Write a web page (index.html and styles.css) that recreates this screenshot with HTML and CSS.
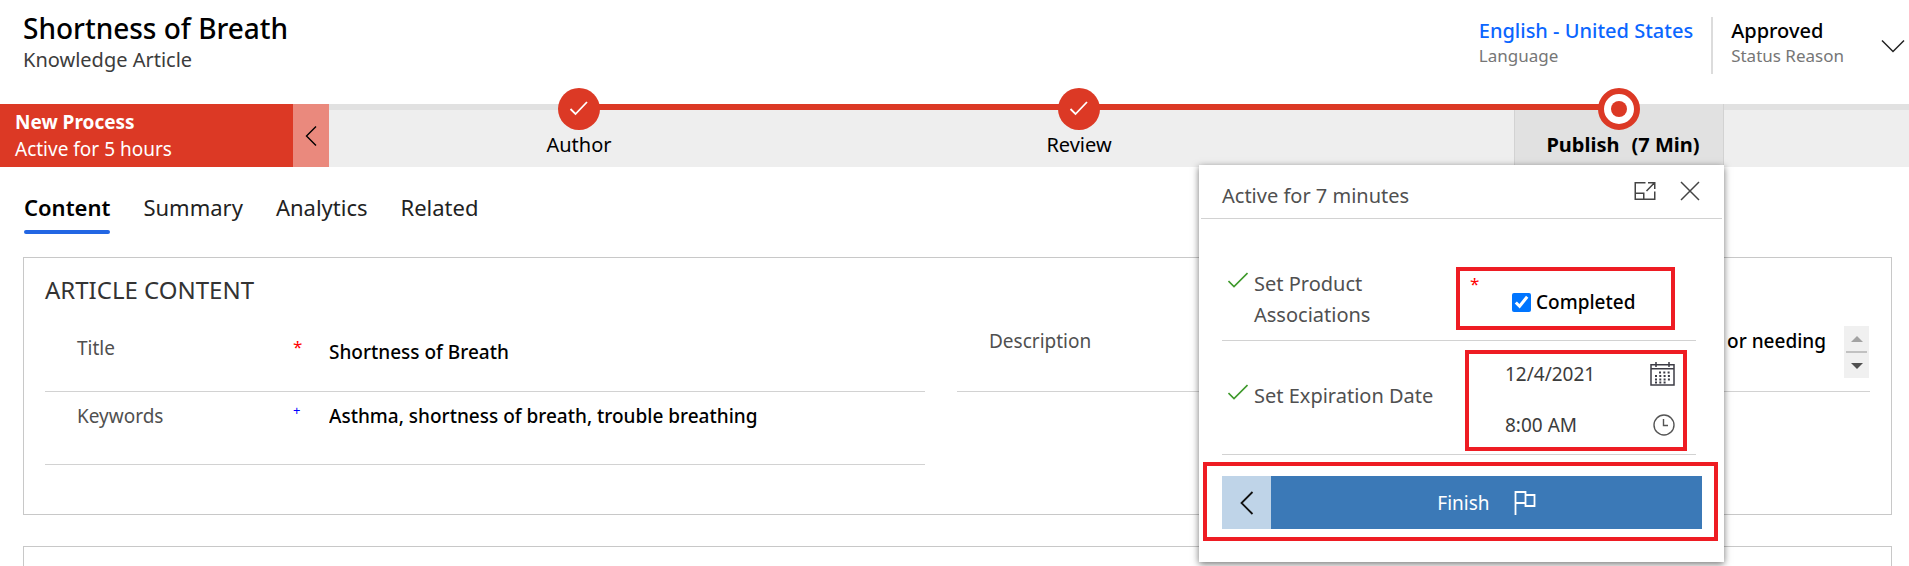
FILE: index.html
```html
<!DOCTYPE html>
<html lang="en">
<head>
<meta charset="utf-8">
<title>Shortness of Breath - Knowledge Article</title>
<link rel="stylesheet" href="styles.css">
</head>
<body>
<header class="record-header">
  <div class="record-heading">
    <h1 class="record-title">Shortness of Breath</h1>
    <p class="record-type">Knowledge Article</p>
  </div>
  <div class="record-facts">
    <div class="fact">
      <a class="fact-value fact-link" href="#">English - United States</a>
      <span class="fact-label">Language</span>
    </div>
    <div class="fact fact-divided">
      <span class="fact-value">Approved</span>
      <span class="fact-label">Status Reason</span>
    </div>
    <button class="icon-button expand-header" type="button" aria-label="Expand header">
      <svg width="24" height="14" viewBox="0 0 24 14" fill="none" stroke="#222" stroke-width="1.5"><path d="M1 1.5 12 12.5 23 1.5"/></svg>
    </button>
  </div>
</header>

<div class="process">
  <div class="process-name">
    <strong class="process-title">New Process</strong>
    <span>Active for 5 hours</span>
  </div>
  <button class="process-collapse" type="button" aria-label="Collapse process">
    <svg width="12" height="20" viewBox="0 0 12 20" fill="none" stroke="#000" stroke-width="1.4"><path d="M11 .5 1.5 10 11 19.5"/></svg>
  </button>
  <div class="stages">
    <div class="stage stage-first">
      <button class="stage-button" type="button">
        <span class="marker"><svg width="20" height="18" viewBox="0 0 20 18" fill="none" stroke="#fff" stroke-width="1.8"><path d="M1.500 9 6.500 14 18 2"/></svg></span>
        <span class="stage-label">Author</span>
      </button>
    </div>
    <div class="stage">
      <button class="stage-button" type="button">
        <span class="marker"><svg width="20" height="18" viewBox="0 0 20 18" fill="none" stroke="#fff" stroke-width="1.8"><path d="M1.500 9 6.500 14 18 2"/></svg></span>
        <span class="stage-label">Review</span>
      </button>
    </div>
    <div class="stage stage-active">
      <div class="stage-anchor">
        <button class="stage-button" type="button">
          <span class="marker marker-current"><span class="marker-dot"></span></span>
          <span class="stage-label"><span>Publish</span><span>(7 Min)</span></span>
        </button>
        <section class="flyout" aria-label="Publish stage">
          <div class="flyout-header">
            <span class="flyout-title">Active for 7 minutes</span>
            <button class="icon-button" type="button" aria-label="Dock">
              <svg width="22" height="20" viewBox="0 0 22 20" fill="none" stroke="#444" stroke-width="1.5"><path d="M11.500 1.750H1.250V18.250H20.750V10.500M1.250 12.250H9.750V18.250M12.500 10 20.500 1.750M14 1.750H20.750V8"/></svg>
            </button>
            <button class="icon-button" type="button" aria-label="Close">
              <svg width="20" height="20" viewBox="0 0 20 20" fill="none" stroke="#444" stroke-width="1.5"><path d="M1 1 19 19M19 1 1 19"/></svg>
            </button>
          </div>
          <div class="flyout-body">
            <div class="step">
              <div class="step-name step-name-top">
                <svg class="step-check" width="20" height="16" viewBox="0 0 20 16" fill="none" stroke="#3f9a2c" stroke-width="1.6"><path d="M.5 9 6 14.500 19.500 1"/></svg>
                <label class="step-label" for="assoc">Set Product Associations</label>
              </div>
              <div class="callout callout-check">
                <span class="required">*</span>
                <label class="completed"><input class="tick" id="assoc" type="checkbox" checked>Completed</label>
              </div>
            </div>
            <div class="step step-date">
              <div class="step-name step-name-middle">
                <svg class="step-check" width="20" height="16" viewBox="0 0 20 16" fill="none" stroke="#3f9a2c" stroke-width="1.6"><path d="M.5 9 6 14.500 19.500 1"/></svg>
                <label class="step-label" for="exp-date">Set Expiration Date</label>
              </div>
              <div class="callout callout-date">
                <div class="date-row">
                  <input class="date-input" id="exp-date" type="text" value="12/4/2021">
                  <button class="icon-button" type="button" aria-label="Pick date">
                    <svg width="25" height="24" viewBox="0 0 25 24" fill="none" stroke="#3c3c46" stroke-width="1.5"><path d="M1 2.750H24V23H1ZM1 6.750H24M6 0V5M19 0V5"/><path stroke-width="2" stroke-dasharray="2 2.300" d="M9 10.500H21M5 14H21M5 17.500H21M5 20.500H17"/></svg>
                  </button>
                </div>
                <div class="date-row">
                  <input class="date-input" type="text" value="8:00 AM" aria-label="Expiration time">
                  <button class="icon-button" type="button" aria-label="Pick time">
                    <svg width="22" height="22" viewBox="0 0 22 22" fill="none" stroke="#555" stroke-width="1.4"><circle cx="11" cy="11" r="10"/><path d="M10.500 5V11.500H15"/></svg>
                  </button>
                </div>
              </div>
            </div>
          </div>
          <div class="callout callout-actions">
            <button class="back" type="button" aria-label="Previous stage">
              <svg width="14" height="24" viewBox="0 0 14 24" fill="none" stroke="#111" stroke-width="1.8"><path d="M12.500 1 1.500 12 12.500 23"/></svg>
            </button>
            <button class="finish" type="button">Finish
              <svg width="22" height="24" viewBox="0 0 22 24" fill="none" stroke="#fff" stroke-width="1.8"><path d="M1.500 24V1H11.500V12H1.500M11.500 4H20.500V15H11.500V12"/></svg>
            </button>
          </div>
        </section>
      </div>
    </div>
  </div>
</div>

<nav class="tabs">
  <a class="tab tab-selected" href="#">Content</a>
  <a class="tab" href="#">Summary</a>
  <a class="tab" href="#">Analytics</a>
  <a class="tab" href="#">Related</a>
</nav>

<section class="card">
  <h2 class="card-title">ARTICLE CONTENT</h2>
  <div class="columns">
    <div>
      <div class="field field-tall">
        <label class="field-label" for="title">Title</label>
        <span class="required">*</span>
        <input class="field-input field-input-title" id="title" type="text" value="Shortness of Breath">
      </div>
      <div class="field">
        <label class="field-label" for="keywords">Keywords</label>
        <span class="recommended">+</span>
        <input class="field-input" id="keywords" type="text" value="Asthma, shortness of breath, trouble breathing">
      </div>
    </div>
    <div>
      <div class="field field-tall field-description">
        <label class="field-label" for="description">Description</label>
        <span></span>
        <div class="description-value">
          <input class="field-input description-input" id="description" type="text" value="or needing">
          <div class="scroller">
            <button class="scroll-button" type="button" aria-label="Scroll up"><svg width="12" height="6" viewBox="0 0 12 6" fill="#a3a3a3"><path d="M6 0 12 6H0Z"/></svg></button>
            <span class="scroll-thumb"></span>
            <button class="scroll-button" type="button" aria-label="Scroll down"><svg width="12" height="6" viewBox="0 0 12 6" fill="#505050"><path d="M0 0H12L6 6Z"/></svg></button>
          </div>
        </div>
      </div>
    </div>
  </div>
</section>
<section class="card card-next"></section>
</body>
</html>
```
FILE: styles.css
```css
* { box-sizing: border-box; }

body {
  margin: 0;
  min-height: 100vh;
  display: flex;
  flex-direction: column;
  background: #fff;
  color: #000;
  font-family: "Noto Sans", "Open Sans", sans-serif;
  font-size: 19px;
  line-height: 30px;
}

h1, h2, p { margin: 0; font-weight: 400; }
a { color: inherit; text-decoration: none; }
svg { display: block; flex: none; }
button, input { font: inherit; color: inherit; }
button { border: 0; padding: 0; background: none; }

.icon-button { flex: none; display: flex; }

.record-header {
  display: flex;
  justify-content: space-between;
  height: 104px;
}
.record-heading { padding: 10px 0 0 23px; }
.record-title { font-size: 28px; line-height: 36px; font-weight: 500; }
.record-type { font-size: 20px; line-height: 28px; color: #3c3c3c; }

.record-facts {
  display: flex;
  align-items: flex-start;
  padding: 17px 4px 0 0;
}
.fact { display: flex; flex-direction: column; padding-bottom: 6px; }
.fact-divided { margin-left: 18px; padding-left: 18px; border-left: 2px solid #dcdcdc; }
.fact-value { font-size: 20px; line-height: 27px; font-weight: 500; }
.fact-link { color: #0b66ff; }
.fact-label { font-size: 17px; line-height: 24px; color: #767676; }
.expand-header { margin: 22px 0 0 37px; }

.process { display: flex; height: 63px; background: #eee; }
.process-name {
  display: flex;
  flex-direction: column;
  width: 293px;
  padding: 5px 0 0 15px;
  background: #dc3925;
  color: #fff;
  line-height: 27px;
}
.process-title { font-weight: 700; }
.process-collapse {
  display: flex;
  align-items: center;
  justify-content: center;
  width: 36px;
  background: #ea897d;
}

.stages {
  flex: 1;
  display: grid;
  grid-template-columns: 25fr 25fr 29fr;
  box-shadow: inset 0 6px #e1e1e1;
}
.stage { position: relative; display: flex; justify-content: center; }
.stage::before {
  content: "";
  position: absolute;
  top: 0;
  left: 0;
  right: 0;
  height: 6px;
  background: #dc3925;
}
.stage-first::before { left: 50%; }
.stage-active::before { right: 50%; z-index: 1; }
.stage-anchor {
  position: relative;
  width: 210px;
  display: flex;
  justify-content: center;
  background: #e1e1e1;
  border: solid #d2d2d2;
  border-width: 0 1px;
}
.stage-button {
  position: relative;
  z-index: 2;
  display: flex;
  flex-direction: column;
  align-items: center;
  margin-top: -16px;
  font-size: 20px;
  line-height: 30px;
}
.marker {
  display: flex;
  align-items: center;
  justify-content: center;
  width: 42px;
  height: 42px;
  border-radius: 50%;
  background: #dc3925;
}
.marker-current { border: 6px solid #dc3925; background: #fff; }
.marker-dot { width: 16px; height: 16px; border-radius: 50%; background: #dc3925; }
.stage-label { display: flex; gap: 12px; }
.stage-active .stage-button { width: 100%; }
.stage-active .stage-label { padding-left: 8px; font-weight: 700; }

.flyout {
  position: absolute;
  z-index: 3;
  top: 61px;
  right: -1px;
  width: 525px;
  padding-bottom: 21px;
  background: #fff;
  box-shadow: 0 2px 7px rgba(0, 0, 0, .55);
}
.flyout-header {
  display: flex;
  align-items: flex-start;
  gap: 24px;
  margin: 0 2px;
  padding: 16px 22px 7px 21px;
  border-bottom: 1px solid #d2d2d2;
  color: #505050;
  font-size: 20px;
}
.flyout-title { flex: 1; }
.flyout-body { padding: 0 28px 0 23px; }
.step {
  display: flex;
  align-items: flex-start;
  justify-content: space-between;
  padding: 48px 21px 10px 6px;
  border-bottom: 1px solid #d2d2d2;
}
.step-date { padding: 9px 9px 3px 6px; }
.step-name { display: flex; align-items: flex-start; gap: 6px; }
.step-name-top { width: 180px; padding-top: 1px; }
.step-name-middle { padding-top: 30px; }
.step-check { margin-top: 4px; }
.step-label { color: #505050; font-size: 20px; line-height: 31px; }

.callout { border: 4px solid #ee1c23; }
.callout-check {
  display: flex;
  align-items: flex-start;
  width: 219px;
  height: 63px;
  padding-left: 10px;
}
.callout-check .required { width: 42px; line-height: 26px; }
.completed {
  display: flex;
  align-items: center;
  gap: 5px;
  padding-top: 16px;
  font-weight: 500;
}
.tick { width: 19px; height: 19px; margin: 0; accent-color: #0075ff; }
.callout-date {
  display: flex;
  flex-direction: column;
  gap: 21px;
  width: 222px;
  padding: 5px 8px 7px 36px;
}
.date-row {
  display: flex;
  align-items: center;
  justify-content: space-between;
  height: 30px;
  color: #3c3c3c;
}
.date-input {
  width: 110px;
  border: 0;
  padding: 0;
  background: none;
}
.callout-actions {
  display: flex;
  margin: 7px 6px 0 4px;
  padding: 10px 12px 8px 15px;
}
.back, .finish {
  display: flex;
  align-items: center;
  justify-content: center;
  height: 53px;
}
.back { width: 49px; background: #bfd4e8; }
.finish { flex: 1; gap: 24px; background: #3b79b7; color: #fff; }

.tabs {
  display: flex;
  gap: 33px;
  padding: 23px 24px 23px;
  font-size: 22px;
  line-height: 34px;
  color: #222;
}
.tab { position: relative; padding-bottom: 10px; }
.tab-selected { color: #000; font-weight: 600; }
.tab-selected::after {
  content: "";
  position: absolute;
  left: 0;
  right: 0;
  bottom: 0;
  height: 4px;
  border-radius: 2px;
  background: #2266e3;
}

.card {
  margin: 0 17px 31px 23px;
  padding: 14px 21px 49px;
  border: 1px solid #c8c8c8;
}
.card-next { flex: 1; margin-bottom: 0; padding: 0; border-bottom: 0; }
.card-title { font-size: 24px; line-height: 36px; color: #333; }
.columns { display: grid; grid-template-columns: 880fr 913fr; gap: 32px; }
.field {
  display: grid;
  grid-template-columns: 248px 36px 1fr;
  align-items: start;
  height: 73px;
  padding-top: 9px;
  border-bottom: 1px solid #d2d2d2;
}
.field-tall { height: 84px; padding-top: 25px; }
.field-description { padding-top: 18px; }
.field-label { padding-left: 32px; color: #505050; }
.field-input {
  width: 100%;
  height: 30px;
  border: 0;
  padding: 0;
  background: none;
  font-weight: 500;
}
.field-input-title { margin-top: 4px; }
.required { color: #f00; font-size: 17px; line-height: 28px; }
.recommended { color: #00f; font-size: 13px; line-height: 18px; }
.description-value { display: flex; gap: 18px; padding-right: 1px; }
.description-input { flex: 1; min-width: 0; text-align: right; }
.scroller {
  display: grid;
  grid-template-rows: 1fr 2px 1fr;
  width: 25px;
  height: 52px;
  background: #f0f0f0;
}
.scroll-button { display: flex; align-items: center; justify-content: center; }
.scroll-thumb { margin: 0 2px; background: #c1c1c1; }
```
